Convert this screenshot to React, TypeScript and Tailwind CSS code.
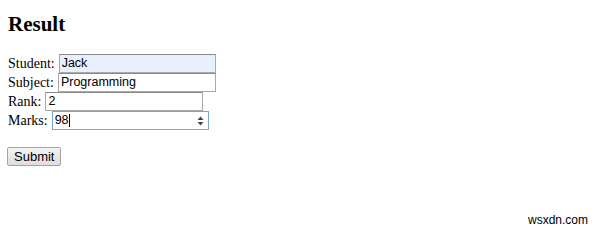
import React from 'react';

// Plain result form, browser-default look

const serif = "font-['Liberation_Serif','Times_New_Roman',serif]";
const sans = "font-['Liberation_Sans',Arial,sans-serif]";

function Field({ label, value, width, focused, autofill, number }: {
  label: string;
  value: string;
  width: string;
  focused?: boolean;
  autofill?: boolean;
  number?: boolean;
}) {
  return (
    <div className="flex items-center h-[19px]">
      <span className="text-[14px] leading-none text-black mr-[4px]">{label}</span>
      <div
        className={[
          'relative flex items-center h-[19px] px-[2px] border text-[12.5px] text-black',
          sans,
          width,
          focused ? 'border-[#7ea4d4]' : 'border-[#a9a9a9] border-t-[#8a8a8a]',
          autofill ? 'bg-[#e8f0fe]' : 'bg-white',
        ].join(' ')}
      >
        <span>{value}</span>
        {focused && <span className="w-px h-[13px] bg-black" />}
        {number && (
          <svg className="absolute right-[4px] top-[4px]" width="7" height="10" viewBox="0 0 7 10">
            <path d="M0.5 4 L3.5 0.5 L6.5 4 Z" fill="#444" />
            <path d="M0.5 6 L3.5 9.5 L6.5 6 Z" fill="#444" />
          </svg>
        )}
      </div>
    </div>
  );
}

export default function App() {
  return (
    <div className={`relative w-[600px] h-[235px] bg-white overflow-hidden ${serif}`}>
      <div className="pl-[8px] pt-[12px]">
        <h1 className="text-[21px] font-bold leading-[24px] text-black">Result</h1>
        <div className="mt-[18px] flex flex-col">
          <Field label="Student:" value="Jack" width="w-[157px]" autofill />
          <Field label="Subject:" value="Programming" width="w-[158px]" />
          <Field label="Rank:" value="2" width="w-[158px]" />
          <Field label="Marks:" value="98" width="w-[157px]" focused number />
        </div>
        <button
          className={`mt-[17px] -ml-[1px] h-[19px] px-[6px] text-[13px] leading-none text-black border border-[#a3a3a3] rounded-[2px] bg-gradient-to-b from-[#f4f4f4] to-[#dedede] ${sans}`}
        >
          Submit
        </button>
      </div>
      <div className={`absolute right-[12px] bottom-[9px] text-[12px] leading-none text-black ${sans}`}>wsxdn.com</div>
    </div>
  );
}
